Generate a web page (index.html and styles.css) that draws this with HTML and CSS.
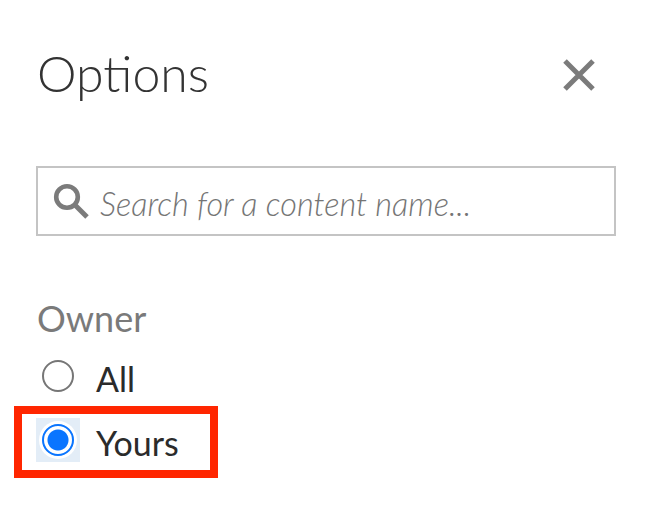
FILE: index.html
```html
<!DOCTYPE html>
<html lang="en">
<head>
  <meta charset="UTF-8" />
  <title>Options</title>
  <link rel="stylesheet" href="styles.css">
</head>
<body>
  <div class="panel">
    <div class="panel-head">
      <h1>Options</h1>
      <button class="close" aria-label="Close">
        <svg width="34" height="34" viewBox="0 0 34 34"><path d="M3 3 L31 31 M31 3 L3 31" stroke="#7b7b7b" stroke-width="5" fill="none"/></svg>
      </button>
    </div>

    <div class="search">
      <svg class="search-icon" width="36" height="36" viewBox="0 0 36 36"><circle cx="14" cy="14" r="10.8" stroke="#7b7b7b" stroke-width="4.6" fill="none"/><path d="M22 22 L34 34" stroke="#7b7b7b" stroke-width="5" fill="none"/></svg>
      <input type="text" placeholder="Search for a content name...">
    </div>

    <h2>Owner</h2>
    <div class="option">
      <span class="radio-wrap"><span class="radio"></span></span>
      <span class="option-label">All</span>
    </div>
    <div class="option selected">
      <span class="radio-wrap"><span class="radio"></span></span>
      <span class="option-label">Yours</span>
      <span class="highlight"></span>
    </div>
  </div>
</body>
</html>
```

FILE: styles.css
```css
body {
  margin: 0;
  background-color: #fff;
  font-family: Lato, "Open Sans", sans-serif;
  color: #333;
}
.panel {
  padding: 40px 32px 44px 36px;
}
.panel-head {
  display: flex;
  justify-content: space-between;
  align-items: center;
  height: 70px;
}
.panel-head h1 {
  margin: 0 0 4px 1px;
  font-size: 50px;
  font-weight: 300;
  font-variant-ligatures: common-ligatures discretionary-ligatures;
  color: #333;
}
.close {
  width: 34px;
  height: 34px;
  margin-right: 20px;
  padding: 0;
  border: none;
  background: none;
  display: flex;
}
.search {
  display: flex;
  align-items: center;
  gap: 11px;
  height: 70px;
  margin-top: 56px;
  padding-left: 15px;
  border: 2px solid #c4c4c4;
  box-sizing: border-box;
}
.search-icon {
  flex: none;
}
.search input {
  flex: 1;
  min-width: 0;
  border: none;
  outline: none;
  padding: 5px 0 0;
  font-family: inherit;
  font-size: 32.5px;
  font-style: italic;
  font-weight: 300;
}
.search input::placeholder {
  color: #757575;
  opacity: 1;
}
h2 {
  margin: 60px 0 4px 1px;
  font-size: 36px;
  line-height: 44px;
  font-weight: 400;
  color: #7a7a7a;
}
.option {
  position: relative;
  display: flex;
  align-items: center;
  gap: 16px;
  height: 64px;
  font-size: 34px;
  color: #2b2b2b;
}
.option-label {
  padding-top: 4px;
}
.radio-wrap {
  width: 44px;
  height: 44px;
  display: flex;
  align-items: center;
  justify-content: center;
}
.radio {
  width: 32px;
  height: 32px;
  box-sizing: border-box;
  border: 2px solid #767676;
  border-radius: 50%;
  background: #fff;
}
.selected .radio-wrap {
  background: #e3edf7;
}
.selected .radio {
  border-color: #0a75ff;
  box-shadow: 0 0 0 3px #fff;
  background: radial-gradient(circle, #0a75ff 0 10px, #fff 11px);
}
.highlight {
  position: absolute;
  left: -22px;
  top: -2px;
  width: 204px;
  height: 72px;
  box-sizing: border-box;
  border: 8px solid #ff2600;
}
```
